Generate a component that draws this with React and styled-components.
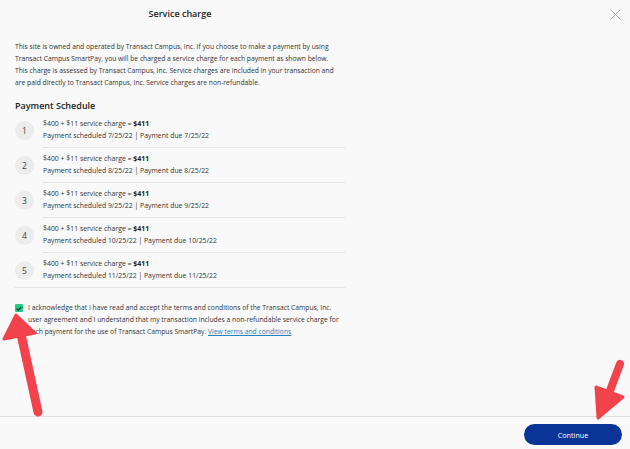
import styled, { createGlobalStyle } from "styled-components";

const GlobalStyle = createGlobalStyle`
    * { box-sizing: border-box; }
    body {
        margin: 0;
        font-family: "Open Sans", "Noto Sans", sans-serif;
        background-color: #f9f9f9;
        color: #333333;
    }
`

const payments = [
    { n: 1, date: "7/25/22" },
    { n: 2, date: "8/25/22" },
    { n: 3, date: "9/25/22" },
    { n: 4, date: "10/25/22" },
    { n: 5, date: "11/25/22" },
];

function App() {
    return (
        <Page>
            <GlobalStyle />
            <Body>
                <Column>
                    <Title>Service charge</Title>
                    <Intro>
                        This site is owned and operated by Transact Campus, Inc. If you choose to make a payment by using
                        Transact Campus SmartPay, you will be charged a service charge for each payment as shown below.
                        This charge is assessed by Transact Campus, Inc. Service charges are included in your transaction and
                        are paid directly to Transact Campus, Inc. Service charges are non-refundable.
                    </Intro>
                    <Heading>Payment Schedule</Heading>
                    <Schedule>
                        {payments.map((p, i) => (
                            <Item key={p.n}>
                                <Number>{p.n}</Number>
                                <Details last={i === payments.length - 1}>
                                    <Line>$400 + $11 service charge = <b>$411</b></Line>
                                    <Line>Payment scheduled {p.date} | Payment due {p.date}</Line>
                                </Details>
                            </Item>
                        ))}
                    </Schedule>
                    <Agree>
                        <Check>
                            <svg width="6" height="5" viewBox="0 0 6 5">
                                <path d="M0.6 2.6 L2.3 4.1 L5.4 0.8" fill="none" stroke="#1b2b2b" strokeWidth="1.2" />
                            </svg>
                        </Check>
                        <AgreeText>
                            I acknowledge that I have read and accept the terms and conditions of the Transact Campus, Inc.
                            user agreement and I understand that my transaction includes a non-refundable service charge for
                            each payment for the use of Transact Campus SmartPay. <Link href="#">View terms and conditions</Link>
                        </AgreeText>
                    </Agree>
                </Column>
                <Side>
                    <Close aria-label="Close">
                        <svg width="11" height="11" viewBox="0 0 11 11">
                            <path d="M0.5 0.5 L10.5 10.5 M10.5 0.5 L0.5 10.5" stroke="#a8a8a8" strokeWidth="1" />
                        </svg>
                    </Close>
                </Side>
            </Body>
            <Footer>
                <Button>Continue</Button>
            </Footer>
            <Arrows width="630" height="449" viewBox="0 0 630 449">
                <g fill="#f2424b" stroke="#f2424b" strokeWidth="3" strokeLinejoin="round" strokeLinecap="round">
                    <path d="M16 315 L4 339 L35 333 Z" />
                    <path d="M21 334 L38 412" strokeWidth="9" fill="none" />
                    <path d="M598 418 L596 387 L623 397 Z" />
                    <path d="M620 364 L608 396" strokeWidth="8" fill="none" />
                </g>
            </Arrows>
        </Page>
    );
}

const Page = styled.div`
    position: relative;
    width: 630px;
    height: 449px;
    display: flex;
    flex-direction: column;
    background-color: #f9f9f9;
    overflow: hidden;
`

const Body = styled.div`
    flex: 1;
    display: flex;
    padding: 7px 8px 0 15px;
`

const Column = styled.div`
    width: 330px;
    display: flex;
    flex-direction: column;
`

const Side = styled.div`
    flex: 1;
    display: flex;
    justify-content: flex-end;
`

const Close = styled.button`
    height: 14px;
    width: 14px;
    padding: 0;
    border: none;
    background: none;
    display: flex;
    align-items: center;
    justify-content: center;
`

const Title = styled.div`
    text-align: center;
    font-size: 9px;
    font-weight: 600;
    line-height: 14px;
    color: #222222;
`

const Intro = styled.p`
    margin: 20px 0 0;
    max-width: 321px;
    font-size: 6.75px;
    line-height: 12px;
    color: #333333;
`

const Heading = styled.div`
    margin-top: 10px;
    font-size: 9px;
    font-weight: 600;
    line-height: 14px;
    color: #222222;
`

const Schedule = styled.div`
    border-bottom: 1px solid #e3e3e3;
`

const Item = styled.div`
    display: flex;
    align-items: center;
`

const Number = styled.div`
    width: 19px;
    height: 19px;
    margin-right: 9px;
    border-radius: 50%;
    background-color: #ececec;
    display: flex;
    align-items: center;
    justify-content: center;
    font-size: 8.5px;
    color: #444444;
`

const Details = styled.div`
    flex: 1;
    padding: 5px 0;
    border-bottom: ${p => (p.last ? "none" : "1px solid #e3e3e3")};
`

const Line = styled.div`
    font-size: 6.9px;
    line-height: 12px;
    color: #333333;
    white-space: nowrap;

    b {
        font-weight: 700;
        color: #222222;
    }
`

const Agree = styled.div`
    margin-top: 14px;
    display: flex;
    align-items: flex-start;
`

const Check = styled.div`
    width: 8px;
    height: 8px;
    margin-top: 2px;
    margin-right: 5px;
    flex-shrink: 0;
    border-radius: 1px;
    background-color: #1fcb80;
    display: flex;
    align-items: center;
    justify-content: center;
`

const AgreeText = styled.div`
    font-size: 6.75px;
    line-height: 12px;
    color: #333333;
`

const Link = styled.a`
    color: #2a80b9;
    text-decoration: underline;
`

const Footer = styled.div`
    border-top: 1px solid #e0e0e0;
    padding: 7px 8px 4px;
    display: flex;
    justify-content: flex-end;
`

const Button = styled.button`
    width: 98px;
    height: 21px;
    border: none;
    border-radius: 11px;
    background-color: #0a3597;
    color: #ffffff;
    font-family: "Open Sans", "Noto Sans", sans-serif;
    font-size: 7.2px;
    font-weight: 400;
`

const Arrows = styled.svg`
    position: absolute;
    left: 0;
    top: 0;
    pointer-events: none;
`

export default App;
